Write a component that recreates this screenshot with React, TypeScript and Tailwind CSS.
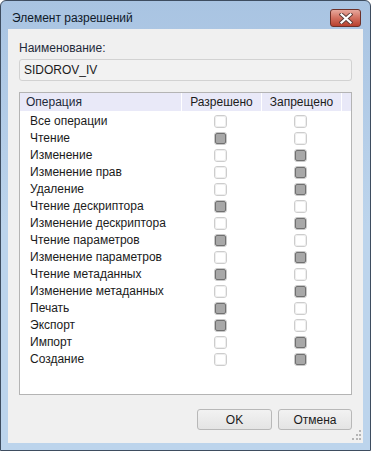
import React from "react";

type Row = { name: string; allow: boolean; deny: boolean };

const rows: Row[] = [
  { name: "Все операции", allow: false, deny: false },
  { name: "Чтение", allow: true, deny: false },
  { name: "Изменение", allow: false, deny: true },
  { name: "Изменение прав", allow: false, deny: true },
  { name: "Удаление", allow: false, deny: true },
  { name: "Чтение дескриптора", allow: true, deny: false },
  { name: "Изменение дескриптора", allow: false, deny: true },
  { name: "Чтение параметров", allow: true, deny: false },
  { name: "Изменение параметров", allow: false, deny: true },
  { name: "Чтение метаданных", allow: true, deny: false },
  { name: "Изменение метаданных", allow: false, deny: true },
  { name: "Печать", allow: true, deny: false },
  { name: "Экспорт", allow: true, deny: false },
  { name: "Импорт", allow: false, deny: true },
  { name: "Создание", allow: false, deny: true },
];

function Check({ on }: { on: boolean }) {
  if (on) {
    return (
      <div className="w-[13px] h-[13px] rounded-[3px] border border-[#c8c8c8] bg-white flex items-center justify-center">
        <div className="w-[11px] h-[11px] rounded-[2px] border border-[#707070] bg-[#a8a8a8]" />
      </div>
    );
  }
  return (
    <div className="w-[13px] h-[13px] rounded-[3px] border border-[#cdcdcd] bg-white flex items-center justify-center">
      <div className="w-[11px] h-[11px] rounded-[2px] border border-[#eeeeee] bg-white" />
    </div>
  );
}

export default function App() {
  return (
    <div
      className="w-[371px] h-[451px] relative text-[12px] text-[#1b1b1b]"
      style={{ fontFamily: '"Liberation Sans", Arial, sans-serif' }}
    >
      <div className="w-[371px] h-[451px] border border-[#3e4d60] rounded-t-[6px] bg-gradient-to-b from-[#a9c4e2] via-[#bcd4ec] to-[#bcd4ec] flex flex-col">
        {/* Title bar */}
        <div className="h-[28px] flex items-start pl-[11px] pr-[8px] shrink-0">
          <div className="pt-[10px] text-[12px] leading-[15px] text-[#0f1a2a]">Элемент разрешений</div>
          <div className="ml-auto mt-[8px] mr-[1px] w-[31px] h-[18px] rounded-[3px] border border-[#6e3129] bg-gradient-to-b from-[#e7a89d] via-[#d26f5f] to-[#b8402e] flex items-center justify-center">
            <svg width="14" height="11" viewBox="0 0 14 11">
              <path d="M2.5 1.5 L11.5 9.5 M11.5 1.5 L2.5 9.5" stroke="#5b3a36" strokeWidth="4" strokeLinecap="square" />
              <path d="M2.5 1.5 L11.5 9.5 M11.5 1.5 L2.5 9.5" stroke="#ffffff" strokeWidth="2.2" strokeLinecap="square" />
            </svg>
          </div>
        </div>
        {/* Client area */}
        <div className="mx-[7px] h-[414px] bg-[#f0f0f0] flex flex-col px-[11px] relative">
          <div className="mt-[12px] leading-[15px] text-[#1e2a3a]">Наименование:</div>
          <div className="mt-[3px] h-[22px] rounded-[3px] border border-[#d2d2d2] bg-[#f2f2f2] flex items-center pl-[4px]">
            SIDOROV_IV
          </div>
          <div className="mt-[11px] h-[303px] border border-[#b4b4b4] bg-white flex flex-col">
            <div className="h-[18px] flex bg-[#e9e9f8] shrink-0">
              <div className="w-[162px] border-r border-white pl-[6px] flex items-center text-[#1e2a3a]">Операция</div>
              <div className="w-[80px] border-r border-white flex items-center justify-center">Разрешено</div>
              <div className="w-[80px] border-r border-white flex items-center justify-center">Запрещено</div>
              <div className="flex-1" />
            </div>
            <div className="pt-[2px] flex flex-col">
              {rows.map((r) => (
                <div key={r.name} className="h-[17px] flex items-center">
                  <div className="w-[162px] pl-[10px] leading-[17px] whitespace-nowrap">{r.name}</div>
                  <div className="w-[80px] pl-[32px]">
                    <Check on={r.allow} />
                  </div>
                  <div className="w-[80px] pl-[32px]">
                    <Check on={r.deny} />
                  </div>
                </div>
              ))}
            </div>
          </div>
          <div className="mt-[14px] flex justify-end gap-[6px]">
            <div className="w-[75px] h-[21px] rounded-[3px] border border-[#b8b8b8] bg-gradient-to-b from-[#f2f2f2] to-[#e4e4e4] flex items-center justify-center">
              OK
            </div>
            <div className="w-[74px] h-[21px] rounded-[3px] border border-[#b8b8b8] bg-gradient-to-b from-[#f2f2f2] to-[#e4e4e4] flex items-center justify-center">
              Отмена
            </div>
          </div>
          <svg className="absolute right-[1px] bottom-[2px]" width="11" height="11" viewBox="0 0 11 11">
            <rect x="8" y="0" width="2" height="2" fill="#b5b5b5" />
            <rect x="5" y="4" width="2" height="2" fill="#b5b5b5" />
            <rect x="8" y="4" width="2" height="2" fill="#b5b5b5" />
            <rect x="1" y="8" width="2" height="2" fill="#b5b5b5" />
            <rect x="5" y="8" width="2" height="2" fill="#b5b5b5" />
            <rect x="8" y="8" width="2" height="2" fill="#b5b5b5" />
          </svg>
        </div>
      </div>
    </div>
  );
}
